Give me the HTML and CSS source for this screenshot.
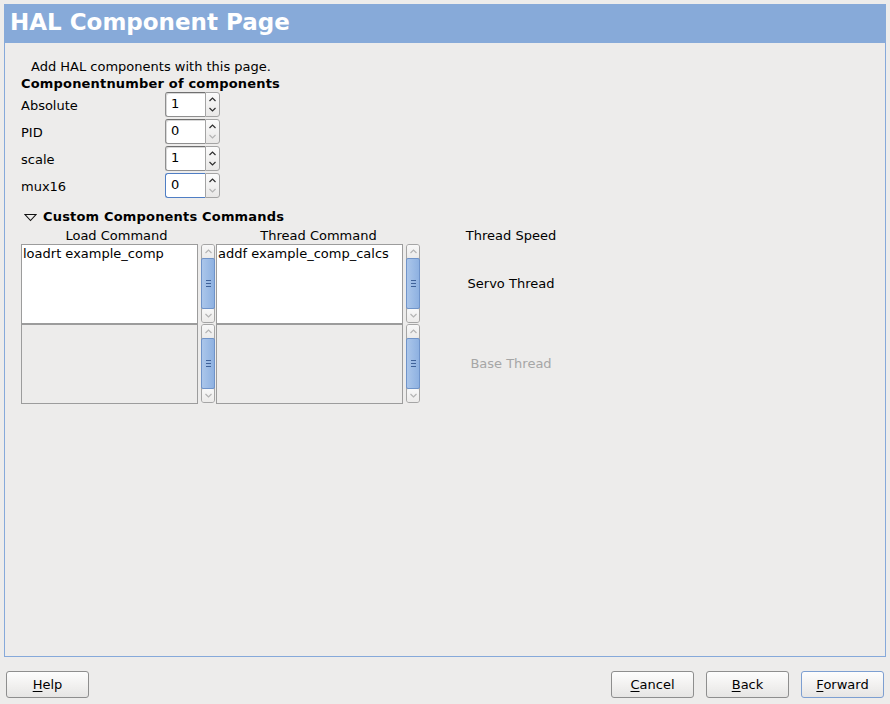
FILE: index.html
```html
<!DOCTYPE html>
<html>
<head>
<meta charset="utf-8">
<link rel="stylesheet" href="styles.css">
</head>
<body>
<div class="page">
  <div class="header">HAL Component Page</div>
  <div class="content">
    <div class="intro">Add HAL components with this page.</div>
    <div class="heading">Componentnumber of components</div>
    <div class="comp-grid">
      <div class="lbl">Absolute</div>
      <div class="spin"><div class="entry">1</div><div class="spinbtn"><svg class="arr" width="7" height="5" viewBox="0 0 7 5"><path d="M0.5 4 L3.5 1 L6.5 4" /></svg><svg class="arr" width="7" height="5" viewBox="0 0 7 5"><path d="M0.5 1 L3.5 4 L6.5 1" /></svg></div></div>
      <div class="lbl">PID</div>
      <div class="spin"><div class="entry">0</div><div class="spinbtn"><svg class="arr" width="7" height="5" viewBox="0 0 7 5"><path d="M0.5 4 L3.5 1 L6.5 4" /></svg><svg class="arr off" width="7" height="5" viewBox="0 0 7 5"><path d="M0.5 1 L3.5 4 L6.5 1" /></svg></div></div>
      <div class="lbl">scale</div>
      <div class="spin"><div class="entry">1</div><div class="spinbtn"><svg class="arr" width="7" height="5" viewBox="0 0 7 5"><path d="M0.5 4 L3.5 1 L6.5 4" /></svg><svg class="arr" width="7" height="5" viewBox="0 0 7 5"><path d="M0.5 1 L3.5 4 L6.5 1" /></svg></div></div>
      <div class="lbl">mux16</div>
      <div class="spin"><div class="entry focus">0</div><div class="spinbtn"><svg class="arr" width="7" height="5" viewBox="0 0 7 5"><path d="M0.5 4 L3.5 1 L6.5 4" /></svg><svg class="arr off" width="7" height="5" viewBox="0 0 7 5"><path d="M0.5 1 L3.5 4 L6.5 1" /></svg></div></div>
    </div>
    <div class="expander"><svg class="tri" width="13" height="9" viewBox="0 0 13 9"><path d="M1 1.5 L12 1.5 L6.5 7.5 Z" /></svg><span>Custom Components Commands</span></div>
    <div class="cmd-grid">
      <div class="colh">Load Command</div>
      <div class="colh">Thread Command</div>
      <div class="colh">Thread Speed</div>

      <div class="tv">loadrt example_comp</div>
      <div class="sbcell"><div class="sb"><div class="sbarr"><svg class="arr off" width="7" height="5" viewBox="0 0 7 5"><path d="M0.5 4 L3.5 1 L6.5 4" /></svg></div><div class="thumb"><i></i><i></i><i></i></div><div class="sbarr"><svg class="arr off" width="7" height="5" viewBox="0 0 7 5"><path d="M0.5 1 L3.5 4 L6.5 1" /></svg></div></div></div>
      <div class="tv">addf example_comp_calcs</div>
      <div class="sbcell"><div class="sb"><div class="sbarr"><svg class="arr off" width="7" height="5" viewBox="0 0 7 5"><path d="M0.5 4 L3.5 1 L6.5 4" /></svg></div><div class="thumb"><i></i><i></i><i></i></div><div class="sbarr"><svg class="arr off" width="7" height="5" viewBox="0 0 7 5"><path d="M0.5 1 L3.5 4 L6.5 1" /></svg></div></div></div>
      <div class="speed">Servo Thread</div>

      <div class="tv off"></div>
      <div class="sbcell"><div class="sb"><div class="sbarr"><svg class="arr off" width="7" height="5" viewBox="0 0 7 5"><path d="M0.5 4 L3.5 1 L6.5 4" /></svg></div><div class="thumb"><i></i><i></i><i></i></div><div class="sbarr"><svg class="arr off" width="7" height="5" viewBox="0 0 7 5"><path d="M0.5 1 L3.5 4 L6.5 1" /></svg></div></div></div>
      <div class="tv off"></div>
      <div class="sbcell"><div class="sb"><div class="sbarr"><svg class="arr off" width="7" height="5" viewBox="0 0 7 5"><path d="M0.5 4 L3.5 1 L6.5 4" /></svg></div><div class="thumb"><i></i><i></i><i></i></div><div class="sbarr"><svg class="arr off" width="7" height="5" viewBox="0 0 7 5"><path d="M0.5 1 L3.5 4 L6.5 1" /></svg></div></div></div>
      <div class="speed dim">Base Thread</div>
    </div>
  </div>
</div>
<div class="buttons">
  <button class="btn"><u>H</u>elp</button>
  <div class="right">
    <button class="btn"><u>C</u>ancel</button>
    <button class="btn"><u>B</u>ack</button>
    <button class="btn def"><u>F</u>orward</button>
  </div>
</div>
</body>
</html>
```
FILE: styles.css
```css
html, body {
  margin: 0;
  padding: 0;
  background: #edeceb;
  font-family: "DejaVu Sans", "Liberation Sans", sans-serif;
  font-size: 13px;
  color: #000;
}
.page {
  margin: 4px 4px 0 4px;
  width: 882px;
  height: 653px;
  box-sizing: border-box;
  border: 1px solid #86a9da;
  border-top: none;
  display: flex;
  flex-direction: column;
}
.header {
  height: 39px;
  box-sizing: border-box;
  margin: 0 -1px;
  background: #87aad9;
  color: #fff;
  font-weight: bold;
  font-size: 23px;
  line-height: 27px;
  padding: 5px 0 0 6px;
}
.content {
  padding: 16px 0 0 16px;
  line-height: 16px;
}
.intro {
  margin-left: 10px;
  height: 16px;
  margin-bottom: 1px;
}
.heading {
  font-weight: bold;
  height: 16px;
  letter-spacing: 0.18px;
}
.comp-grid {
  margin-top: 0;
  display: grid;
  grid-template-columns: 144px 55px;
  row-gap: 2px;
  align-items: center;
}
.lbl {
  padding-top: 3px;
}
.spin {
  display: flex;
  height: 25px;
}
.entry {
  width: 40px;
  box-sizing: border-box;
  background: #fff;
  border: 1px solid #8f8f8f;
  border-top-color: #6f6f6f;
  border-right: none;
  border-radius: 3px 0 0 3px;
  padding: 3px 0 0 5px;
  box-shadow: inset 1px 1px 0 #d8d8d8;
}
.entry.focus {
  border: 1px solid #4f7ec4;
  border-right: none;
  box-shadow: none;
}
.spinbtn {
  width: 15px;
  box-sizing: border-box;
  border: 1px solid #a4a4a4;
  border-radius: 0 3px 3px 0;
  background: linear-gradient(#fbfbfb, #e9e8e7);
  display: flex;
  flex-direction: column;
  align-items: center;
  justify-content: space-around;
  padding: 1px 0;
}
.arr {
  display: block;
}
.arr path {
  fill: none;
  stroke: #2e2e2e;
  stroke-width: 1.2;
}
.arr.off path {
  stroke: #b4b4b4;
}
.expander {
  margin-top: 11px;
  display: flex;
  align-items: center;
  font-weight: bold;
  height: 16px;
  letter-spacing: 0.18px;
}
.tri {
  margin: 0 6px 0 3px;
}
.tri path {
  fill: none;
  stroke: #111;
  stroke-width: 1.1;
}
.cmd-grid {
  margin-top: 3px;
  display: grid;
  grid-template-columns: 177px 18px 187px 18px 180px;
  grid-template-rows: 16px 80px 80px;
}
.colh {
  text-align: center;
  line-height: 16px;
  grid-column: span 2;
}
.colh:first-child {
  padding-right: 4px;
}
.colh:nth-child(3) {
  grid-column: span 1;
}
.tv {
  box-sizing: border-box;
  background: #fff;
  border: 1px solid #9c9c9c;
  padding: 1px 0 0 1px;
  line-height: 16px;
}
.tv.off {
  background: #edeceb;
}
.sbcell {
  padding: 0 0 0 3px;
  display: flex;
}
.sb {
  width: 14px;
  box-sizing: border-box;
  border: 1px solid #a5a5a5;
  border-radius: 3px;
  background: #e4e3e2;
  display: flex;
  flex-direction: column;
  margin: 0 0 1px 0;
}
.sbarr {
  height: 13px;
  display: flex;
  align-items: center;
  justify-content: center;
  background: linear-gradient(#f8f8f8, #ecebea);
  border-radius: 2px;
}
.thumb {
  flex: 1;
  background: linear-gradient(90deg, #abc6ea, #8eb1e1);
  border: 1px solid #6f93c9;
  margin: 0 -1px;
  border-radius: 2px;
  display: flex;
  flex-direction: column;
  align-items: center;
  justify-content: center;
  gap: 2px;
}
.thumb i {
  display: block;
  width: 5px;
  height: 1px;
  background: #3f629a;
}
.speed {
  display: flex;
  align-items: center;
  justify-content: center;
}
.speed.dim {
  color: #a6a6a6;
}
.buttons {
  display: flex;
  justify-content: space-between;
  padding: 14px 6px 0 6px;
}
.right {
  display: flex;
  gap: 12px;
}
.btn {
  width: 83px;
  height: 27px;
  box-sizing: border-box;
  border: 1px solid #8e8e8e;
  border-radius: 3px;
  background: linear-gradient(#fdfdfd, #f1f0ef 55%, #e6e5e4);
  font-family: "DejaVu Sans", "Liberation Sans", sans-serif;
  font-size: 13px;
  color: #000;
  padding: 0;
  line-height: 16px;
}
.btn.def {
  border-color: #7d9fd1;
}
.btn u {
  text-decoration: underline;
  text-underline-offset: 2px;
}
```
